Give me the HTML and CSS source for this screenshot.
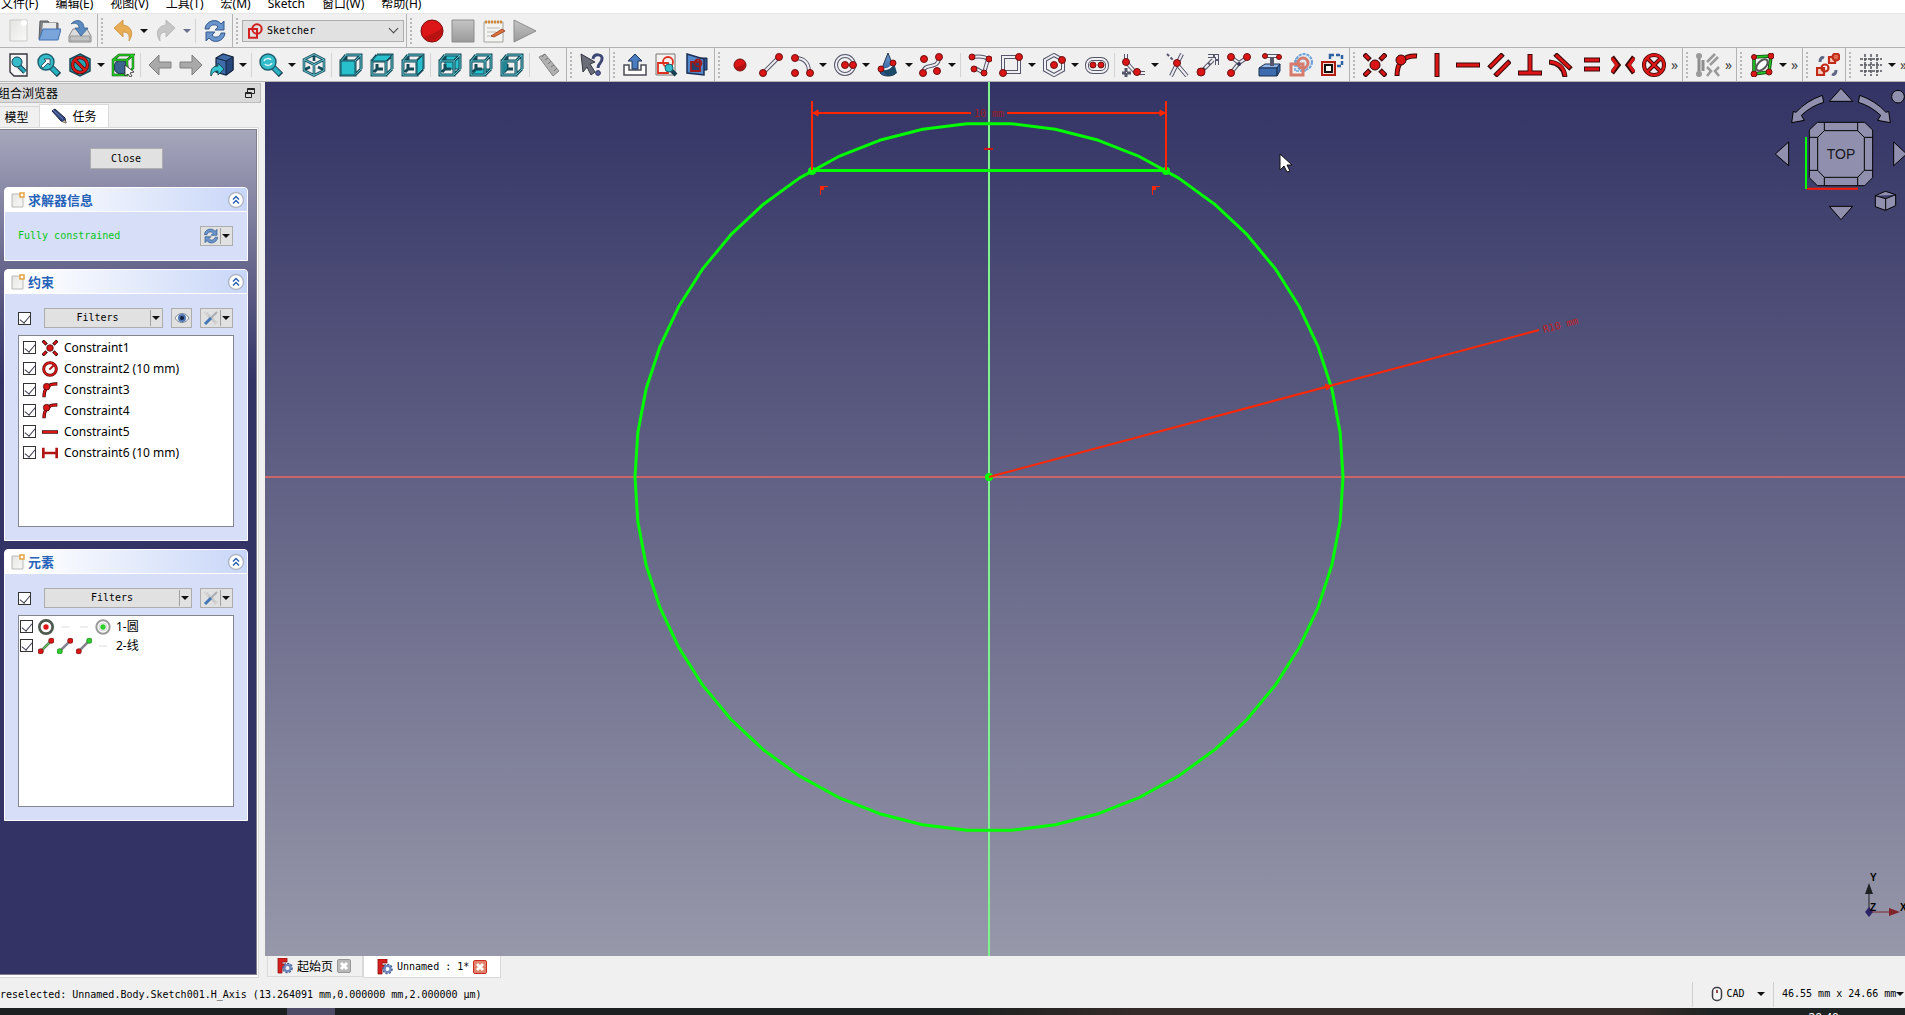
FILE: index.html
```html
<!DOCTYPE html>
<html lang="zh-CN">
<head>
<meta charset="utf-8">
<title>FreeCAD</title>
<link rel="stylesheet" href="styles.css">
</head>
<body>
<svg class="defs" width="0" height="0" aria-hidden="true">
  <defs>
    <linearGradient id="g-paper" x2="1" y2="1"><stop stop-color="#e4e4e2"/><stop offset="1" stop-color="#fafafa"/></linearGradient>
    <linearGradient id="g-grey" x2="0" y2="1"><stop stop-color="#c4c4c4"/><stop offset="1" stop-color="#9a9a9a"/></linearGradient>
    <linearGradient id="g-blue" x2="0" y2="1"><stop stop-color="#6f9fd8"/><stop offset="1" stop-color="#24508c"/></linearGradient>
  </defs>
  <symbol id="i-new" viewBox="0 0 24 24"><path d="M4 1h17v21H4z" fill="url(#g-paper)" stroke="#c9c9c6"/><circle cx="18" cy="4" r="3" fill="#fff"/></symbol>
  <symbol id="i-open" viewBox="0 0 24 24"><path d="M3 2h8l1 2h9v16H2z" fill="#7f8285" stroke="#5c5f62"/><path d="M6 4h13v9H5z" fill="#e9e9e9"/><path d="M6 10h18l-3 11H2z" fill="#7aa5da" stroke="#3f6fb0"/></symbol>
  <symbol id="i-save" viewBox="0 0 24 24"><path d="M5 10h14l4 7v6H1v-6z" fill="#dcdcdc" stroke="#8b8b8b"/><path d="M2 17h20v5H2z" fill="#c2c2c2" stroke="#9a9a9a"/><path d="M3 5c5-6 13-4 13 4h4l-7 8-6-8h4c0-4-4-6-8-4z" fill="#5b8ac0" stroke="#34608f" stroke-width=".8"/></symbol>
  <symbol id="i-undo" viewBox="0 0 24 24"><path d="M3 9l9-8v5c9 1 11 9 6 16 1-6-1-9-6-9v5z" fill="#e8ac55" stroke="#c98f3e" stroke-width=".8"/></symbol>
  <symbol id="i-redo" viewBox="0 0 24 24"><path d="M21 9l-9-8v5C3 7 1 15 6 22c-1-6 1-9 6-9v5z" fill="#c6c6c6" stroke="#b0b0b0" stroke-width=".8"/></symbol>
  <symbol id="i-refresh" viewBox="0 0 24 24"><path d="M2 10C3 1 14-1 18 5l3-3v9h-9l3-3c-3-4-8-2-9 2z" fill="#6a95cc" stroke="#34598c"/><path d="M22 14c-1 9-12 11-16 5l-3 3v-9h9l-3 3c3 4 8 2 9-2z" fill="#6a95cc" stroke="#34598c"/></symbol>
  <symbol id="i-sketcher" viewBox="0 0 24 24"><path d="M3 9h12v13H3z" fill="none" stroke="#d21f1f" stroke-width="3"/><circle cx="15" cy="9" r="7" fill="none" stroke="#d21f1f" stroke-width="3"/></symbol>
  <symbol id="i-record" viewBox="0 0 24 24"><circle cx="12" cy="12" r="11" fill="#dc1616" stroke="#7a0b0b"/><path d="M4 18C10 16 17 13 22 9c2 11-13 17-18 9z" fill="#b81313"/></symbol>
  <symbol id="i-stop" viewBox="0 0 24 24"><path d="M1 1h22v22H1z" fill="url(#g-grey)" stroke="#8d8d8d"/></symbol>
  <symbol id="i-edit" viewBox="0 0 24 24"><path d="M2 3h19v20H2z" fill="#f3f3f1" stroke="#a2a2a0"/><path d="M3 3h18" stroke="#d08a3a" stroke-width="3" stroke-dasharray="2 1"/><path d="M5 9h13M5 13h9M5 17h6" stroke="#bbb"/><path d="M9 17l11-7 3 2-11 6z" fill="#e0703a" stroke="#8f3a20" stroke-width=".8"/></symbol>
  <symbol id="i-play" viewBox="0 0 24 24"><path d="M1 1l22 11L1 23z" fill="url(#g-grey)" stroke="#8d8d8d"/></symbol>

  <symbol id="i-fitall" viewBox="0 0 24 24"><path d="M4 1h17v22H8l-4-4z" fill="#f5f5f5" stroke="#34343c" stroke-width="1.4"/><path d="M13 13l6 6" stroke="#173f52" stroke-width="5"/><path d="M13 13l6 6" stroke="#28a8ba" stroke-width="3"/><circle cx="11" cy="9" r="5" fill="#35bccb" stroke="#173f52"/></symbol>
  <symbol id="i-fitsel" viewBox="0 0 24 24"><path d="M13 13l9 9" stroke="#173f52" stroke-width="6"/><path d="M13 13l8 8" stroke="#28b0c0" stroke-width="4"/><circle cx="9" cy="9" r="8" fill="#35bccb" stroke="#1a5d6d" stroke-width="1.4"/><path d="M4 13l5-5-2-2h6v6l-2-2-5 5z" fill="#fff" stroke="#234" stroke-width=".8"/></symbol>
  <symbol id="i-draw" viewBox="0 0 24 24"><path d="M12 1l10 5v12l-10 5-10-5V6z" fill="#25a4b2" stroke="#174a5a" stroke-width="1.5"/><circle cx="12" cy="12" r="7.500" fill="none" stroke="#5c0a0a" stroke-width="3.500"/><path d="M7 7l10 10" stroke="#5c0a0a" stroke-width="3.500"/><circle cx="12" cy="12" r="7.500" fill="none" stroke="#dc1a1a" stroke-width="2"/><path d="M7 7l10 10" stroke="#dc1a1a" stroke-width="2"/></symbol>
  <symbol id="i-bbox" viewBox="0 0 24 24"><circle cx="10" cy="14" r="7" fill="#3c6290" stroke="#17304c"/><path d="M2 7h14v15H2zM2 7l6-5h14l-6 5M22 2v13l-6 7" fill="none" stroke="#123c12" stroke-width="2.400"/><path d="M2 7h14v15H2zM2 7l6-5h14l-6 5M22 2v13l-6 7" fill="none" stroke="#1fd51f" stroke-width="1.500"/><path d="M14 12l9 7-4 1 2 3-2 1-2-3-3 2z" fill="#fff" stroke="#222" stroke-width=".8"/></symbol>
  <symbol id="i-back" viewBox="0 0 24 24"><path d="M1 12L11 2v7h12v6H11v7z" fill="#a9a9a9" stroke="#808080"/></symbol>
  <symbol id="i-fwd" viewBox="0 0 24 24"><path d="M23 12L13 2v7H1v6h12v7z" fill="#a9a9a9" stroke="#808080"/></symbol>
  <symbol id="i-link" viewBox="0 0 24 24"><path d="M6 5l7-4 10 3v13l-7 5-10-3z" fill="#3f6bab" stroke="#14243f" stroke-width="1.2"/><path d="M6 5l10 3v14l7-5V4L16 8" fill="#27477c" stroke="#14243f"/><path d="M1 23c-1-7 2-10 7-10v-3l6 6-6 6v-4c-3 0-5 1-7 5z" fill="#35c4cf" stroke="#144a55"/></symbol>
  <symbol id="i-zoom" viewBox="0 0 24 24"><path d="M14 14l8 8" stroke="#173f52" stroke-width="6"/><path d="M14 14l7 7" stroke="#28b0c0" stroke-width="4"/><circle cx="9" cy="9" r="8" fill="#35bccb" stroke="#1a5d6d" stroke-width="1.4"/><path d="M5 8c1-3 6-3 7-1M13 10c-1 3-6 3-7 1" fill="none" stroke="#e8f8fa" stroke-width="1.500"/></symbol>
  <symbol id="i-iso" viewBox="0 0 24 24"><path d="M12 1.500l10 5v11l-10 5-10-5v-11zM2 6.500l10 5 10-5M12 11v11M12 2v6M2 17l6-3M22 17l-6-3" fill="none" stroke="#154a58" stroke-width="2.600"/><path d="M12 1.500l10 5v11l-10 5-10-5v-11zM2 6.500l10 5 10-5M12 11v11" fill="none" stroke="#6fccd8"/></symbol>
  <symbol id="wire" viewBox="0 0 24 24"><path class="wa" d="M2 8h14v14H2zM7 2h15v14M7 2L2 8M22 2l-6 6M22 16l-6 6M7 2v6M7 11v5h6M7 16l-3 3"/><path class="wb" d="M2 8h14v14H2zM7 2h15v14M7 2L2 8M22 2l-6 6M22 16l-6 6"/></symbol>
  <symbol id="i-front" viewBox="0 0 24 24"><use href="#wire"/><path class="face" d="M2 8h14v14H2z"/></symbol>
  <symbol id="i-top" viewBox="0 0 24 24"><use href="#wire"/><path class="face" d="M2 8l5-6h15l-6 6z"/></symbol>
  <symbol id="i-right" viewBox="0 0 24 24"><use href="#wire"/><path class="face" d="M16 8l6-6v14l-6 6z"/></symbol>
  <symbol id="i-rear" viewBox="0 0 24 24"><path class="face" d="M7 2h15v14H7z"/><use href="#wire"/></symbol>
  <symbol id="i-bottom" viewBox="0 0 24 24"><path class="face" d="M2 22l5-6h15l-6 6z"/><use href="#wire"/></symbol>
  <symbol id="i-left" viewBox="0 0 24 24"><path class="face" d="M2 8l5-6v14l-5 6z"/><use href="#wire"/><path d="M3 9h4v7l-4 5z" fill="#1d8796"/></symbol>
  <symbol id="i-measure" viewBox="0 0 24 24"><path d="M2 4l6-3 14 17-6 5z" fill="#b0b0b0" stroke="#888"/><path d="M8 1l-3 3M11 5L8 7M14 8l-3 3M17 12l-3 2M20 15l-3 3" stroke="#777"/></symbol>

  <symbol id="i-whats" viewBox="0 0 24 24"><path d="M1 1l14 8-5 2 5 8-4 3-4-8-4 5z" fill="#6b6d78" stroke="#34363f"/><path d="M13 6c1-6 10-5 9 0 0 4-4 4-4 9" fill="none" stroke="#3d4775" stroke-width="3"/><circle cx="18" cy="20" r="2.400" fill="#54609a" stroke="#2d3561"/></symbol>
  <symbol id="i-leave" viewBox="0 0 24 24"><path d="M1 12h5v5h12v-5h5v10H1z" fill="#fff" stroke="#4b4b55" stroke-width="1.500"/><path d="M12 1l7 7h-4v8H9V8H5z" fill="#4c7cc0" stroke="#1d3358"/></symbol>
  <symbol id="i-viewsk" viewBox="0 0 24 24"><path d="M2 1h19v21H2z" fill="#f6f2ef" stroke="#777"/><path d="M4 10h10v10H4z" fill="none" stroke="#e0301e" stroke-width="1.800"/><circle cx="14" cy="9" r="5" fill="none" stroke="#e0301e" stroke-width="1.800"/><path d="M17 17l5 5" stroke="#173f52" stroke-width="4"/><circle cx="15" cy="15" r="4" fill="#35bccb" stroke="#1a5d6d"/></symbol>
  <symbol id="i-section" viewBox="0 0 24 24"><path d="M13 5h9v12h-9z" fill="#2d559b" stroke="#14243f"/><path d="M2 1l17 5v16L2 20z" fill="#5287cc" stroke="#1b2f55" stroke-width="1.500"/><path d="M6 9h9v9H6z" fill="#24406f" stroke="#a01818" stroke-width="1.800"/><circle cx="13" cy="10" r="3.500" fill="none" stroke="#a01818" stroke-width="1.800"/></symbol>

  <symbol id="i-point" viewBox="0 0 24 24"><circle cx="12" cy="12" r="6" class="nd"/><path d="M7 14c4 0 8-2 10-4 1 8-8 10-10 4z" fill="#b01212"/></symbol>
  <symbol id="i-line" viewBox="0 0 24 24"><path class="dk" d="M4 20L20 4"/><path class="wh" d="M4 20L20 4"/><circle class="nd" cx="4" cy="20" r="3.500"/><circle class="nd" cx="20" cy="4" r="3.500"/></symbol>
  <symbol id="i-arc" viewBox="0 0 24 24"><path class="dk" d="M5 5c9 0 14 5 14 14"/><path class="wh" d="M5 5c9 0 14 5 14 14"/><circle class="nd" cx="5" cy="5" r="3.500"/><circle class="nd" cx="20" cy="20" r="3.500"/><circle class="nd" cx="5" cy="20" r="3.500"/></symbol>
  <symbol id="i-circle" viewBox="0 0 24 24"><circle class="dk" cx="12" cy="12" r="9"/><circle class="wh" cx="12" cy="12" r="9"/><circle class="nd" cx="12" cy="12" r="3.500"/><circle class="nd" cx="20" cy="12" r="3.500"/></symbol>
  <symbol id="i-conic" viewBox="0 0 24 24"><path d="M12 0l8 20c-3 4-13 4-16 0z" fill="url(#g-blue)" stroke="#26354f"/><path d="M4 16c7 2 13-1 14-6l3 10c-4 3-7 3-9 3z" fill="#1d4968"/><path class="wh" d="M5 16c7 1 11-2 12-6"/><circle class="nd" cx="5" cy="16" r="3"/><circle class="nd" cx="17" cy="10" r="3"/></symbol>
  <symbol id="i-bspline" viewBox="0 0 24 24"><path class="dk" d="M4 20c1-12 15-2 16-15"/><path class="wh" d="M4 20c1-12 15-2 16-15"/><circle class="nd" cx="5" cy="6" r="3.500"/><circle class="nd" cx="20" cy="4" r="3.500"/><circle class="nd" cx="4" cy="20" r="3.500"/><circle class="nd" cx="18" cy="18" r="3.500"/></symbol>
  <symbol id="i-poly" viewBox="0 0 24 24"><path class="dk" d="M4 4c6-1 12-1 16 2l-4 14-9-5"/><path class="wh" d="M4 4c6-1 12-1 16 2l-4 14-9-5"/><circle class="nd" cx="4" cy="4" r="3"/><circle class="nd" cx="21" cy="6" r="3"/><circle class="nd" cx="16" cy="20" r="3"/><circle class="nd" cx="6" cy="16" r="3"/></symbol>
  <symbol id="i-rect" viewBox="0 0 24 24"><path class="dk" d="M4 4h16v15H4z"/><path class="wh" d="M4 4h16v15H4z"/><circle class="nd" cx="20" cy="4" r="3.500"/><circle class="nd" cx="4" cy="20" r="3.500"/></symbol>
  <symbol id="i-hex" viewBox="0 0 24 24"><path class="dk" d="M12 2l9 5v10l-9 5-9-5V7z"/><path class="wh" d="M12 2l9 5v10l-9 5-9-5V7z"/><circle class="nd" cx="12" cy="12" r="3.500"/><circle class="nd" cx="20" cy="7" r="3.500"/></symbol>
  <symbol id="i-slot" viewBox="0 0 24 24"><rect class="dk" x="2" y="6" width="20" height="13" rx="6"/><rect class="wh" x="2" y="6" width="20" height="13" rx="6"/><circle class="nd" cx="8" cy="12" r="3"/><circle class="nd" cx="16" cy="12" r="3"/></symbol>
  <symbol id="i-fillet" viewBox="0 0 24 24"><path class="dk" d="M4 1v8l10 11h9"/><path class="wh" d="M4 1v8l10 11h9"/><path d="M4 15v9M0 20h10" stroke="#55566a" stroke-width="3" stroke-dasharray="4 1"/><circle class="nd" cx="4" cy="9" r="3.500"/><circle class="nd" cx="15" cy="19" r="3.500"/></symbol>
  <symbol id="i-trim" viewBox="0 0 24 24"><path class="dk" d="M17 1L6 23M10 9l12 14"/><path d="M2 1l7 7" stroke="#55566a" stroke-width="2" stroke-dasharray="3 2"/><path class="wh" d="M17 1L6 23M10 9l12 14"/><circle class="nd" cx="12" cy="10" r="3.500"/></symbol>
  <symbol id="i-extend" viewBox="0 0 24 24"><path class="dk" d="M4 20l13-13M12 3h9v9"/><path class="wh" d="M4 20l13-13M12 3h9v9" stroke-dasharray="5 2"/><circle class="nd" cx="5" cy="19" r="4"/></symbol>
  <symbol id="i-split" viewBox="0 0 24 24"><path class="dk" d="M4 4l8 6 9-6M12 10L4 20"/><path class="wh" d="M4 4l8 6 9-6M12 10L4 20"/><circle class="nd" cx="4" cy="4" r="3.500"/><circle class="nd" cx="20" cy="4" r="3.500"/><circle class="nd" cx="4" cy="20" r="3.500"/><circle cx="12" cy="11" r="2" fill="#335"/></symbol>
  <symbol id="i-external" viewBox="0 0 24 24"><path d="M1 15l6-4h15l-3 4z" fill="#8db5e8" stroke="#1c3152"/><path d="M1 15h18v8H1zM19 15l3-4v7l-3 5z" fill="#3c6cae" stroke="#1c3152"/><path class="dk" d="M6 3h15M14 3v10"/><path class="wh" d="M6 3h15"/><circle class="nd" cx="7" cy="3" r="2.500"/><circle class="nd" cx="21" cy="4" r="2.500"/></symbol>
  <symbol id="i-carbon" viewBox="0 0 24 24"><path d="M6 6h10v12H6z" fill="#dbe8f5" stroke="#6ba0d6" stroke-width="1.500" stroke-dasharray="3 1"/><circle cx="15" cy="9" r="8" fill="#dbe8f5" stroke="#6ba0d6" stroke-width="2" stroke-dasharray="3 1"/><path d="M2 11h12v11H2z" fill="none" stroke="#d67a6c" stroke-width="3"/><circle cx="14" cy="10" r="5" fill="none" stroke="#d67a6c" stroke-width="3"/></symbol>
  <symbol id="i-copy" viewBox="0 0 24 24"><path d="M10 2h12v11H10z" fill="none" stroke="#2e62a3" stroke-width="2.500" stroke-dasharray="4 2"/><path d="M2 9h13v13H2z" fill="#f7d9cd" stroke="#b01d12" stroke-width="2"/><path d="M5 12h7v7H5z" fill="#fff" stroke="#111" stroke-width="2"/></symbol>

  <symbol id="i-coinc" viewBox="0 0 24 24"><path class="rb" d="M1 1l6 6M23 1l-6 6M1 23l6-6M23 23l-6-6"/><path class="rt" d="M2 2l4 4M22 2l-4 4M2 22l4-4M22 22l-4-4"/><circle class="nd2" cx="12" cy="12" r="5"/></symbol>
  <symbol id="i-onobj" viewBox="0 0 24 24"><path class="rb" d="M3 23C3 9 10 2 23 3"/><path class="rt" d="M3 22C3 9 10 3 22 3"/><circle class="nd2" cx="7" cy="7" r="5"/></symbol>
  <symbol id="i-vert" viewBox="0 0 24 24"><path class="rb" d="M12 0v24"/><path class="rt" d="M12 1v22"/></symbol>
  <symbol id="i-horiz" viewBox="0 0 24 24"><path class="rb" d="M0 12h24"/><path class="rt" d="M1 12h22"/></symbol>
  <symbol id="i-para" viewBox="0 0 24 24"><path class="rb" d="M2 15L16 1M8 23L23 8"/><path class="rt" d="M3 14L15 2M9 22L22 9"/></symbol>
  <symbol id="i-perp" viewBox="0 0 24 24"><path class="rb" d="M0 20h24M12 20V1"/><path class="rt" d="M1 20h22M12 20V2"/></symbol>
  <symbol id="i-tangent" viewBox="0 0 24 24"><path class="rb" d="M6 1l16 15M0 9c9 1 15 6 16 15"/><path class="rt" d="M7 2l14 13M1 9c9 1 14 6 15 14"/></symbol>
  <symbol id="i-equal" viewBox="0 0 24 24"><path class="rb" d="M4 7h16M4 16h16"/><path class="rt" d="M5 7h14M5 16h14"/></symbol>
  <symbol id="i-sym" viewBox="0 0 24 24"><path class="rb" d="M1 4l6 8-6 8M23 4l-6 8 6 8"/><path class="rt" d="M1 5l5 7-5 7M23 5l-5 7 5 7"/></symbol>
  <symbol id="i-block" viewBox="0 0 24 24"><g fill="none" stroke="#3a0808" stroke-width="4"><circle cx="12" cy="12" r="10"/><path d="M5 5l14 14M19 5L5 19"/></g><g fill="none" stroke="#dc1616" stroke-width="2.400"><circle cx="12" cy="12" r="10"/><path d="M5 5l14 14M19 5L5 19"/></g></symbol>
  <symbol id="i-toggle" viewBox="0 0 24 24"><path d="M3 3v19M7 7v11" stroke="#8d8d8d" stroke-width="3"/><circle cx="3" cy="3" r="3" fill="#9a9a9a"/><circle cx="3" cy="21" r="3" fill="#9a9a9a"/><path d="M11 9l8-8M14 12l8-8M11 14l4 4-4 5M23 14l-4 4 4 5" fill="none" stroke="#9a9a9a" stroke-width="2.500"/></symbol>
  <symbol id="i-dof" viewBox="0 0 24 24"><path d="M4 4l17-1-2 16-15 2z" fill="#f4f4f4" stroke="#114411" stroke-width="3.500"/><path d="M4 4l17-1-2 16-15 2z" fill="none" stroke="#22c322" stroke-width="1.800"/><ellipse cx="12" cy="12" rx="7" ry="4" transform="rotate(-45 12 12)" fill="#fff" stroke="#555" stroke-width="2"/><circle class="nd" cx="4" cy="4" r="2.500"/><circle class="nd" cx="21" cy="3" r="3"/><circle class="nd" cx="19" cy="19" r="3"/><circle class="nd" cx="4" cy="21" r="3"/></symbol>
  <symbol id="i-switch" viewBox="0 0 24 24"><path d="M1 15h7v7H1zM13 4h6v6h-6z" fill="#f4cbbb" stroke="#c22a18" stroke-width="2.200"/><circle cx="9" cy="15" r="3.500" fill="none" stroke="#c22a18" stroke-width="2.200"/><circle cx="20" cy="4" r="3.500" fill="#e06a50" stroke="#c22a18" stroke-width="2.200"/><path d="M4 9c0-4 2-5 4-4M20 17c0 4-2 5-4 4" fill="none" stroke="#5d6683" stroke-width="3"/></symbol>
  <symbol id="i-grid" viewBox="0 0 24 24"><path d="M6 1v22M12 1v22M18 1v22M1 6h22M1 12h22M1 18h22" stroke="#50525a" stroke-width="1.500" stroke-dasharray="3 1"/></symbol>

  <symbol id="i-radius" viewBox="0 0 24 24"><circle cx="12" cy="12" r="9.500" fill="#fff" stroke="#6a1010" stroke-width="4.500"/><circle cx="12" cy="12" r="9.500" fill="none" stroke="#d91515" stroke-width="2.500"/><path d="M11 13l7-7" stroke="#b31212" stroke-width="3"/></symbol>
  <symbol id="i-hdist" viewBox="0 0 24 24"><path d="M2 4v16M22 4v16M2 12h20" stroke="#b01414" stroke-width="4"/></symbol>
  <symbol id="e-circle" viewBox="0 0 24 24"><circle cx="12" cy="12" r="10" fill="#fff" stroke="#4d5a4d" stroke-width="4"/><circle cx="12" cy="12" r="4" fill="#d91515"/></symbol>
  <symbol id="e-center" viewBox="0 0 24 24"><circle cx="12" cy="12" r="10" fill="#fff" stroke="#9a9a9a" stroke-width="3"/><circle cx="12" cy="12" r="6" fill="none" stroke="#bbb"/><circle cx="12" cy="12" r="4" fill="#2dcf2d"/></symbol>
  <symbol id="e-line" viewBox="0 0 24 24"><path d="M4 20L20 4" stroke="#3d5a3d" stroke-width="4"/><path d="M4 20L20 4" stroke="#69c869" stroke-width="2"/><circle cx="4" cy="20" r="4" class="nd"/><circle cx="20" cy="4" r="4" class="nd"/></symbol>
  <symbol id="e-start" viewBox="0 0 24 24"><path d="M4 20L20 4" stroke="#85858f" stroke-width="4"/><circle cx="4" cy="20" r="4" class="gn"/><circle cx="20" cy="4" r="4" class="nd"/></symbol>
  <symbol id="e-end" viewBox="0 0 24 24"><path d="M4 20L20 4" stroke="#85858f" stroke-width="4"/><circle cx="4" cy="20" r="4" class="nd"/><circle cx="20" cy="4" r="4" class="gn"/></symbol>
  <symbol id="e-none" viewBox="0 0 24 24"><path d="M6 12h12" stroke="#ddd" stroke-width="1.500"/></symbol>

  <symbol id="i-float" viewBox="0 0 12 12"><path d="M3.500 1.500h7v5h-7zM3.500 2.500h7M1.500 5.500h6v5h-6zM1.500 6.500h6" fill="#dadada" stroke="#222"/></symbol>
  <symbol id="i-pencil" viewBox="0 0 16 16"><path d="M1 3l3-2 10 9 1 5-5-2z" fill="#32477f" stroke="#1c2748"/><path d="M2 2l10 9" stroke="#7087c0"/><path d="M14 12l1 3-4-1z" fill="#c9b28a"/></symbol>
  <symbol id="i-doc" viewBox="0 0 14 16"><path d="M1 2h11v13H1z" fill="url(#g-paper)" stroke="#b9b9b9"/><path d="M9 1h4v4H9z" fill="#fff" stroke="#e3a440" stroke-width="1.500"/></symbol>
  <symbol id="i-up" viewBox="0 0 18 18"><circle cx="9" cy="9" r="7.500" fill="#fff" stroke="#b4b8c4" stroke-width="1.500"/><path d="M6 8.500l3-3 3 3M6 12.500l3-3 3 3" fill="none" stroke="#2a62b0" stroke-width="1.500"/></symbol>
  <symbol id="i-eye" viewBox="0 0 16 16"><path d="M1 8c3-6 11-6 14 0-3 6-11 6-14 0z" fill="#f2f2f2" stroke="#858c96"/><circle cx="8" cy="8" r="4" fill="#4b78b5"/><circle cx="8" cy="8" r="2" fill="#15213a"/></symbol>
  <symbol id="i-tools" viewBox="0 0 16 16"><path d="M3 3l10 10" stroke="#cacaca" stroke-width="3"/><path d="M1 2l4 4M11 15l4-4" stroke="#d6d6d6" stroke-width="2"/><path d="M14 2L8 8" stroke="#a9adb3" stroke-width="2"/><path d="M8 8l-6 6" stroke="#4577b8" stroke-width="3"/></symbol>
  <symbol id="i-logo" viewBox="0 0 16 16"><path d="M1 0h9v4H5v2h3v4H5v5H1z" fill="#d81e1e" stroke="#8c1010" stroke-width=".8"/><circle cx="10.500" cy="10" r="4" fill="none" stroke="#4a5f94" stroke-width="2.600" stroke-dasharray="2 1"/><circle cx="10.500" cy="10" r="3" fill="none" stroke="#6e86bd" stroke-width="2"/></symbol>
  <symbol id="i-x" viewBox="0 0 14 14"><path d="M4 4l6 6M10 4l-6 6" stroke="#fff" stroke-width="3"/></symbol>
  <symbol id="i-mouse" viewBox="0 0 12 16"><rect x="1.500" y="1.500" width="9" height="13" rx="4" fill="#f8f8f8" stroke="#3f3f46" stroke-width="1.500"/><path d="M6 4v3" stroke="#9c4a4a" stroke-width="2"/></symbol>
</svg>

<nav class="menubar" aria-label="菜单">
  <a href="#">文件(F)</a><a href="#">编辑(E)</a><a href="#">视图(V)</a><a href="#">工具(T)</a><a href="#">宏(M)</a><a href="#">Sketch</a><a href="#">窗口(W)</a><a href="#">帮助(H)</a>
</nav>

<div class="toolbar">
  <div class="group first">
    <button class="tool" aria-label="New"><svg><use href="#i-new"/></svg></button>
    <button class="tool" aria-label="Open"><svg><use href="#i-open"/></svg></button>
    <button class="tool" aria-label="Save"><svg><use href="#i-save"/></svg></button>
  </div>
  <div class="group">
    <button class="tool" aria-label="Undo"><svg><use href="#i-undo"/></svg></button><button class="drop" aria-label="Undo history"></button>
    <button class="tool" aria-label="Redo"><svg><use href="#i-redo"/></svg></button><button class="drop dim" aria-label="Redo history"></button>
    <span class="sep"></span>
    <button class="tool" aria-label="Refresh"><svg><use href="#i-refresh"/></svg></button>
  </div>
  <div class="group">
    <div class="workbench"><svg><use href="#i-sketcher"/></svg><select aria-label="Workbench"><option>Sketcher</option></select></div>
  </div>
  <div class="group last">
    <button class="tool" aria-label="Record macro"><svg><use href="#i-record"/></svg></button>
    <button class="tool" aria-label="Stop macro"><svg><use href="#i-stop"/></svg></button>
    <button class="tool" aria-label="Macros"><svg><use href="#i-edit"/></svg></button>
    <button class="tool" aria-label="Execute macro"><svg><use href="#i-play"/></svg></button>
  </div>
</div>

<div class="toolbar">
  <div class="group first">
    <button class="tool" aria-label="Fit all"><svg><use href="#i-fitall"/></svg></button>
    <button class="tool" aria-label="Fit selection"><svg><use href="#i-fitsel"/></svg></button>
    <button class="tool" aria-label="Draw style"><svg><use href="#i-draw"/></svg></button><button class="drop" aria-label="Draw styles"></button>
    <button class="tool" aria-label="Bounding box"><svg><use href="#i-bbox"/></svg></button>
    <span class="sep"></span>
    <button class="tool" aria-label="Back"><svg><use href="#i-back"/></svg></button>
    <button class="tool" aria-label="Forward"><svg><use href="#i-fwd"/></svg></button>
    <button class="tool" aria-label="Go to linked object"><svg><use href="#i-link"/></svg></button><button class="drop" aria-label="Link menu"></button>
    <span class="sep"></span>
    <button class="tool" aria-label="Sync view"><svg><use href="#i-zoom"/></svg></button><button class="drop" aria-label="Zoom menu"></button>
    <button class="tool" aria-label="Isometric"><svg><use href="#i-iso"/></svg></button>
    <span class="sep"></span>
    <button class="tool" aria-label="Front"><svg><use href="#i-front"/></svg></button>
    <button class="tool" aria-label="Top"><svg><use href="#i-top"/></svg></button>
    <button class="tool" aria-label="Right"><svg><use href="#i-right"/></svg></button>
    <span class="sep"></span>
    <button class="tool" aria-label="Rear"><svg><use href="#i-rear"/></svg></button>
    <button class="tool" aria-label="Bottom"><svg><use href="#i-bottom"/></svg></button>
    <button class="tool" aria-label="Left"><svg><use href="#i-left"/></svg></button>
    <span class="sep"></span>
    <button class="tool" aria-label="Measure"><svg><use href="#i-measure"/></svg></button>
  </div>
  <div class="group"><button class="tool" aria-label="What's this?"><svg><use href="#i-whats"/></svg></button></div>
  <div class="group">
    <button class="tool" aria-label="Leave sketch"><svg><use href="#i-leave"/></svg></button>
    <button class="tool" aria-label="View sketch"><svg><use href="#i-viewsk"/></svg></button>
    <button class="tool" aria-label="View section"><svg><use href="#i-section"/></svg></button>
  </div>
  <div class="group">
    <button class="tool" aria-label="Point"><svg><use href="#i-point"/></svg></button>
    <button class="tool" aria-label="Line"><svg><use href="#i-line"/></svg></button>
    <button class="tool" aria-label="Arc"><svg><use href="#i-arc"/></svg></button><button class="drop" aria-label="Arcs"></button>
    <button class="tool" aria-label="Circle"><svg><use href="#i-circle"/></svg></button><button class="drop" aria-label="Circles"></button>
    <button class="tool" aria-label="Conic"><svg><use href="#i-conic"/></svg></button><button class="drop" aria-label="Conics"></button>
    <button class="tool" aria-label="B-spline"><svg><use href="#i-bspline"/></svg></button><button class="drop" aria-label="B-splines"></button>
    <span class="sep"></span>
    <button class="tool" aria-label="Polyline"><svg><use href="#i-poly"/></svg></button>
    <button class="tool" aria-label="Rectangle"><svg><use href="#i-rect"/></svg></button><button class="drop" aria-label="Rectangles"></button>
    <button class="tool" aria-label="Polygon"><svg><use href="#i-hex"/></svg></button><button class="drop" aria-label="Polygons"></button>
    <button class="tool" aria-label="Slot"><svg><use href="#i-slot"/></svg></button>
    <span class="sep"></span>
    <button class="tool" aria-label="Fillet"><svg><use href="#i-fillet"/></svg></button><button class="drop" aria-label="Fillets"></button>
    <button class="tool" aria-label="Trim"><svg><use href="#i-trim"/></svg></button>
    <button class="tool" aria-label="Extend"><svg><use href="#i-extend"/></svg></button>
    <button class="tool" aria-label="Split"><svg><use href="#i-split"/></svg></button>
    <button class="tool" aria-label="External geometry"><svg><use href="#i-external"/></svg></button>
    <button class="tool" aria-label="Carbon copy"><svg><use href="#i-carbon"/></svg></button>
    <button class="tool" aria-label="Construction geometry"><svg><use href="#i-copy"/></svg></button>
  </div>
  <div class="group">
    <button class="tool" aria-label="Coincident"><svg><use href="#i-coinc"/></svg></button>
    <button class="tool" aria-label="Point on object"><svg><use href="#i-onobj"/></svg></button>
    <button class="tool" aria-label="Vertical"><svg><use href="#i-vert"/></svg></button>
    <button class="tool" aria-label="Horizontal"><svg><use href="#i-horiz"/></svg></button>
    <button class="tool" aria-label="Parallel"><svg><use href="#i-para"/></svg></button>
    <button class="tool" aria-label="Perpendicular"><svg><use href="#i-perp"/></svg></button>
    <button class="tool" aria-label="Tangent"><svg><use href="#i-tangent"/></svg></button>
    <button class="tool" aria-label="Equal"><svg><use href="#i-equal"/></svg></button>
    <button class="tool" aria-label="Symmetric"><svg><use href="#i-sym"/></svg></button>
    <button class="tool" aria-label="Block"><svg><use href="#i-block"/></svg></button>
    <button class="more">»</button>
  </div>
  <div class="group">
    <button class="tool" aria-label="Toggle constraint"><svg><use href="#i-toggle"/></svg></button>
    <button class="more">»</button>
  </div>
  <div class="group">
    <button class="tool" aria-label="Select DoF"><svg><use href="#i-dof"/></svg></button><button class="drop" aria-label="Selection menu"></button>
    <button class="more">»</button>
  </div>
  <div class="group"><button class="tool" aria-label="Switch space"><svg><use href="#i-switch"/></svg></button></div>
  <div class="group last">
    <button class="tool" aria-label="Grid"><svg><use href="#i-grid"/></svg></button><button class="drop" aria-label="Grid menu"></button>
    <button class="more">»</button>
  </div>
</div>

<div class="workspace">
  <aside class="dock">
    <header class="dock-title"><span>组合浏览器</span><button aria-label="Float"><svg><use href="#i-float"/></svg></button></header>
    <div class="dock-tabs"><button>模型</button><button class="on"><svg><use href="#i-pencil"/></svg>任务</button></div>
    <div class="pane"><div class="tasks">
      <button class="close">Close</button>

      <section class="panel">
        <h2><svg class="doc"><use href="#i-doc"/></svg>求解器信息<svg class="up"><use href="#i-up"/></svg></h2>
        <div class="body"><div class="row solver"><span class="ok">Fully constrained</span><button class="split small" aria-label="Update"><span><svg><use href="#i-refresh"/></svg></span><i></i></button></div></div>
      </section>

      <section class="panel">
        <h2><svg class="doc"><use href="#i-doc"/></svg>约束<svg class="up"><use href="#i-up"/></svg></h2>
        <div class="body">
          <div class="row"><input type="checkbox" checked aria-label="Filter constraints"><button class="split"><span>Filters</span><i></i></button><button class="eye" aria-label="Show"><svg><use href="#i-eye"/></svg></button><button class="split small" aria-label="Settings"><span><svg><use href="#i-tools"/></svg></span><i></i></button></div>
          <ul class="list">
            <li><label><input type="checkbox" checked><svg><use href="#i-coinc"/></svg>Constraint1</label></li>
            <li><label><input type="checkbox" checked><svg><use href="#i-radius"/></svg>Constraint2 (10 mm)</label></li>
            <li><label><input type="checkbox" checked><svg><use href="#i-onobj"/></svg>Constraint3</label></li>
            <li><label><input type="checkbox" checked><svg><use href="#i-onobj"/></svg>Constraint4</label></li>
            <li><label><input type="checkbox" checked><svg><use href="#i-horiz"/></svg>Constraint5</label></li>
            <li><label><input type="checkbox" checked><svg><use href="#i-hdist"/></svg>Constraint6 (10 mm)</label></li>
          </ul>
        </div>
      </section>

      <section class="panel">
        <h2><svg class="doc"><use href="#i-doc"/></svg>元素<svg class="up"><use href="#i-up"/></svg></h2>
        <div class="body">
          <div class="row"><input type="checkbox" checked aria-label="Filter elements"><button class="split"><span>Filters</span><i></i></button><button class="split small" aria-label="Settings"><span><svg><use href="#i-tools"/></svg></span><i></i></button></div>
          <ul class="list elements">
            <li><label><input type="checkbox" checked><span class="marks"><svg><use href="#e-circle"/></svg><svg><use href="#e-none"/></svg><svg><use href="#e-none"/></svg><svg><use href="#e-center"/></svg></span>1-圆</label></li>
            <li><label><input type="checkbox" checked><span class="marks"><svg><use href="#e-line"/></svg><svg><use href="#e-start"/></svg><svg><use href="#e-end"/></svg><svg><use href="#e-none"/></svg></span>2-线</label></li>
          </ul>
        </div>
      </section>
    </div></div>
  </aside>

  <main class="center">
    <div class="viewport">
      <svg class="scene" viewBox="0 0 1640 874" preserveAspectRatio="xMidYMid slice" role="img" aria-label="Sketch">
        <defs><path id="quarter" d="M0-353.300L22.200-353.300 66.300-347.700 109.400-336.700 150.700-320.300 189.700-298.900 225.600-272.800 258.100-242.300 286.400-208.100 310.200-170.500 329.100-130.300 342.900-88 351.200-44.400 354 0"/></defs>
        <g transform="translate(724 395)">
          <path d="M-724 0H916" stroke="#cc6666" stroke-width="2"/>
          <path d="M0-395V479" stroke="#7df58c" stroke-width="2"/>
          <g fill="none" stroke="#00ff00" stroke-width="3" stroke-linejoin="round">
            <use href="#quarter"/><use href="#quarter" transform="scale(-1 1)"/><use href="#quarter" transform="scale(1 -1)"/><use href="#quarter" transform="scale(-1 -1)"/>
            <path d="M-177-306.500H177"/>
          </g>
          <g fill="#00ff00"><circle r="4"/><circle cx="-177" cy="-306" r="4"/><circle cx="177" cy="-306" r="4"/></g>
          <g stroke="#ff2600" stroke-width="2" fill="none">
            <path d="M-177-376V-307M177-376V-307M-177-364H-18M18-364H177M0 0L550-147"/>
          </g>
          <path d="M-176-364l5-3v6zM176-364l-5-3v6zM342-91l-6-2 2 6z" fill="#ff2600" stroke="#ff2600"/>
          <path d="M-5-328H4" stroke="#d01414" stroke-width="2"/>
          <path d="M-169-291h8v1h-4v3h-3v5h-1zM163-291h8v1h-4v3h-3v5h-1z" fill="#ff2600"/>
          <text class="dim-label" x="-15" y="-360">10 mm</text>
          <text class="dim-label bright" transform="translate(555 -144) rotate(-15)">R10 mm</text>
          <path d="M291-323v16l4-4 3 6 3-1-3-6h5z" fill="#fff" stroke="#111"/>
        </g>
      </svg>

      <svg class="navcube" viewBox="0 0 495 450" role="img" aria-label="Navigation cube">
        <g fill="#9090ae" stroke="#000" stroke-width="3" stroke-linejoin="round">
          <path d="M303 25l35 39h-70zM303 419l35-40h-70zM106 222l40-36v71zM500 222l-39-36v71z"/>
          <path id="turn" d="M247 46l4 21Q214 78 184 106l9 15-38 7 5-34 8 3Q200 62 247 46z"/>
          <use href="#turn" transform="translate(606 0) scale(-1 1)"/>
          <circle cx="474" cy="50" r="19"/>
          <path d="M232 127H374L398 150V293L374 317H232L208 293V150z"/>
          <path d="M253 127v25h100v-25M253 317v-25h100v25M208 172h25v99h-25M398 172h-25v99h25M253 152l-20 20M353 152l20 20M253 292l-20-21M353 292l20-21" fill="none"/>
          <path d="M406 347l30-13 31 10v33l-31 14-30-11zM406 347l31 9 30-12M437 356v35"/>
        </g>
        <path d="M198 171v156" stroke="#00ff00" stroke-width="6"/><path d="M201 326h153" stroke="#ff1c00" stroke-width="6"/>
        <text x="303" y="237" text-anchor="middle">TOP</text>
      </svg>

      <svg class="axes" viewBox="0 0 50 50" role="img" aria-label="Axes">
        <path d="M14 37V11" stroke="#1c2222"/><path d="M14 8l4 11h-8z" fill="#1c2222"/>
        <path d="M14 37h22" stroke="#80242c"/><path d="M45 37l-11-4v8z" fill="#80242c"/><path d="M14 32l4 5-4 5-4-5z" fill="#2c2468"/>
        <text x="15" y="6">Y</text><text x="15" y="36">Z</text><text x="45" y="36">X</text>
      </svg>
    </div>
    <div class="doc-tabs">
      <div class="doc-tab cjk"><svg><use href="#i-logo"/></svg><span>起始页</span><button aria-label="关闭"><svg><use href="#i-x"/></svg></button></div>
      <div class="doc-tab on"><svg><use href="#i-logo"/></svg><span>Unnamed : 1*</span><button aria-label="关闭"><svg><use href="#i-x"/></svg></button></div>
    </div>
  </main>
</div>

<footer class="status">
  <output>reselected: Unnamed.Body.Sketch001.H_Axis (13.264091 mm,0.000000 mm,2.000000 μm)</output>
  <button class="nav-style"><svg><use href="#i-mouse"/></svg><span>CAD</span><i></i></button>
  <button class="dims"><span>46.55 mm x 24.66 mm</span><i></i></button>
</footer>
<div class="taskbar"><span class="task"></span><time>20:40</time></div>
</body>
</html>
```
FILE: styles.css
```css
* { box-sizing: border-box; }

body {
  margin: 0;
  height: 100vh;
  display: flex;
  flex-direction: column;
  overflow: hidden;
  background: #f0f0f0;
  color: #000;
  font: 10px/14px "DejaVu Sans Mono", "Noto Sans CJK SC", monospace;
}

button, select { font: inherit; color: inherit; margin: 0; padding: 0; border: 0; background: none; }
button { display: flex; align-items: center; justify-content: center; }
svg { display: block; flex: none; }
.defs { position: absolute; }

/* icon paint */
.dk { fill: none; stroke: #55566a; stroke-width: 4; }
.wh { fill: none; stroke: #f0f0f4; stroke-width: 2; }
.nd { fill: #dc1616; stroke: #6b1010; stroke-width: 1; }
.nd2 { fill: #d91515; stroke: #2a0808; stroke-width: 1; }
.gn { fill: #2dcf2d; stroke: #1d7a1d; stroke-width: 1; }
.rb { fill: none; stroke: #3a0808; stroke-width: 5; }
.rt { fill: none; stroke: #dc1616; stroke-width: 3; }
.wa { fill: none; stroke: #154a58; stroke-width: 3; }
.wb { fill: none; stroke: #5cc4d0; stroke-width: 1; }
.face { fill: #28c0cc; stroke: #154a58; stroke-width: 1; }

/* menu */
.menubar {
  flex: none;
  height: 14px;
  display: flex;
  gap: 17px;
  overflow: hidden;
  padding-left: 1px;
  background: #fff;
  border-bottom: 1px solid #e6e6e6;
  font: 12px/20px "Noto Sans", "Noto Sans CJK SC", sans-serif;
}
.menubar a { margin-top: -6px; color: #000; text-decoration: none; white-space: nowrap; }

/* toolbars */
.toolbar {
  flex: none;
  height: 34px;
  display: flex;
  overflow: hidden;
  border-bottom: 1px solid #b4b4b4;
}
.group {
  flex: none;
  display: flex;
  align-items: center;
  padding-right: 2px;
  border-right: 1px solid #b4b4b4;
}
.group::before {
  content: "";
  width: 2px;
  height: 26px;
  margin: 0 4px 0 3px;
  background: repeating-linear-gradient(#b8b8b8 0 2px, transparent 2px 4px);
}
.group.first { padding-left: 2px; }
.group.first::before { display: none; }
.group.last { border-right: 0; }
.tool { width: 31px; height: 30px; }
.tool svg { width: 24px; height: 24px; }
.drop { width: 12px; height: 30px; }
.drop::after, .split i, .status i {
  content: "";
  flex: none;
  border: 4px solid transparent;
  border-top-color: #111;
  border-bottom: 0;
}
.drop.dim::after { border-top-color: #6c7090; }
.sep { width: 1px; height: 24px; margin: 0 3px 0 2px; background: #d2d2d2; }
.more { width: 11px; height: 30px; font: 14px/30px "Noto Sans", sans-serif; color: #444; }

.workbench {
  width: 162px;
  height: 22px;
  display: flex;
  align-items: center;
  gap: 4px;
  padding: 0 4px;
  background: #e1e1e1;
  border: 1px solid #adadad;
}
.workbench svg { width: 16px; height: 16px; }
.workbench select { flex: 1; height: 20px; appearance: none; outline: 0; }
.workbench::after {
  content: "";
  width: 6px;
  height: 6px;
  margin: 0 2px 4px 0;
  border: solid #444;
  border-width: 0 1px 1px 0;
  transform: rotate(45deg);
}

/* workspace */
.workspace { flex: 1; min-height: 0; display: grid; grid-template-columns: 265px 1fr; }
.dock { display: flex; flex-direction: column; min-height: 0; padding: 1px 4px 0 0; font-family: "Noto Sans CJK SC", sans-serif; }
.dock-title {
  flex: none;
  height: 20px;
  display: flex;
  align-items: center;
  justify-content: space-between;
  padding-right: 4px;
  overflow: hidden;
  background: #dadada;
  border: 1px solid #bcbcbc;
  border-left: 0;
  font-size: 12px;
}
.dock-title span { margin-left: -2px; }
.dock-title svg { width: 12px; height: 12px; }
.dock-tabs { flex: none; height: 24px; display: flex; align-items: flex-end; }
.dock-tabs button { height: 21px; width: 39px; padding-right: 6px; border-top: 1px solid #d9d9d9; font-size: 12px; }
.dock-tabs .on {
  height: 23px;
  width: 70px;
  padding: 0;
  gap: 5px;
  background: #fff;
  border: 1px solid #d9d9d9;
  border-bottom: 0;
}
.dock-tabs svg { width: 16px; height: 16px; }
.pane {
  flex: 1;
  min-height: 0;
  margin-right: 2px;
  padding: 1px 1px 2px 0;
  background: #fff;
  border: 1px solid #d9d9d9;
  border-left: 0;
}
.tasks {
  height: 100%;
  overflow: hidden;
  padding: 18px 8px 0 4px;
  border: 1px solid #7f7f8c;
  border-left: 0;
  background: linear-gradient(#a6a6bc 0, #333366 250px);
}
.close { width: 73px; height: 21px; margin: 0 auto 18px; }
.close, .split, .eye { background: #e1e1e1; border: 1px solid #adadad; font: 10px/14px "DejaVu Sans Mono", monospace; }

.panel { margin-bottom: 8px; border: 1px solid #fff; border-radius: 4px 4px 0 0; background: #d6dff7; overflow: hidden; }
.panel h2 {
  height: 24px;
  margin: 0;
  display: flex;
  align-items: center;
  gap: 3px;
  padding: 0 2px 0 6px;
  border-bottom: 1px solid #fff;
  background: linear-gradient(90deg, #fff 10%, #c8d6f8);
  color: #2763b8;
  font-size: 13px;
  font-weight: 700;
}
.doc { width: 14px; height: 16px; }
.up { width: 18px; height: 18px; margin-left: auto; }
.body { padding: 14px 13px 13px; }
.row { display: flex; align-items: center; gap: 8px; padding-right: 1px; }
.row.solver { justify-content: space-between; padding-bottom: 1px; }
.ok { color: #00c814; font: 10px/14px "DejaVu Sans Mono", monospace; }
.split { flex: 1; height: 20px; }
.split span {
  flex: 1;
  height: 16px;
  display: flex;
  align-items: center;
  justify-content: center;
  border-right: 1px solid #a0a0a0;
}
.split i { margin: 0 2px 0 1px; }
.split.small { flex: none; width: 33px; }
.split svg, .eye svg { width: 16px; height: 16px; }
.eye { width: 21px; height: 20px; }

input[type="checkbox"] {
  appearance: none;
  flex: none;
  width: 13px;
  height: 13px;
  margin: 0;
  display: flex;
  justify-content: center;
  background: #fff;
  border: 1px solid #333;
}
.row input[type="checkbox"] { margin-right: 5px; }
input[type="checkbox"]:checked::before {
  content: "";
  width: 5px;
  height: 9px;
  border: solid #3c3c50;
  border-width: 0 1px 1px 0;
  transform: rotate(40deg);
}

.list {
  list-style: none;
  height: 192px;
  margin: 7px 0 0;
  padding: 1px 4px;
  background: #fff;
  border: 1px solid #828790;
  font: 12px/21px "Noto Sans", "Noto Sans CJK SC", sans-serif;
}
.list label { height: 21px; display: flex; align-items: center; gap: 6px; white-space: nowrap; }
.list svg { width: 16px; height: 16px; }
.list .rb { stroke: #a03030; }
.list.elements { padding: 1px; }
.elements label { height: 19px; gap: 5px; }
.marks { display: flex; gap: 3px; }

.center { min-width: 0; min-height: 0; display: flex; flex-direction: column; }
.viewport { position: relative; flex: 1; min-height: 0; overflow: hidden; background: linear-gradient(#333365, #9798aa); }
.scene { width: 100%; height: 100%; }
.dim-label { font: 10px "DejaVu Sans Mono", monospace; fill: #9c1c24; }
.dim-label.bright { fill: #c42020; }
.navcube { position: absolute; top: -2px; right: 0; width: 165px; height: 150px; }
.navcube text { font: 42px "Liberation Sans", sans-serif; fill: #16161c; }
.axes { position: absolute; right: 0; bottom: 31px; width: 50px; height: 50px; overflow: visible; }
.axes text { font: bold 10px "Liberation Sans", sans-serif; }

.doc-tabs { flex: none; height: 22px; display: flex; padding-left: 2px; }
.doc-tab { height: 21px; display: flex; align-items: center; gap: 4px; padding: 0 11px 0 9px; border: 1px solid #d9d9d9; border-top: 0; white-space: nowrap; }
.doc-tab.cjk { font: 12px/14px "Noto Sans CJK SC", sans-serif; }
.doc-tab.on { height: 22px; padding: 0 13px; background: #fff; }
.doc-tab svg { width: 16px; height: 16px; }
.doc-tab button { width: 14px; height: 14px; background: #b9b9b9; border: 1px solid #999; border-radius: 2px; }
.doc-tab.on button { background: #e0836c; border-color: #cc2a1c; }
.doc-tab button svg { width: 14px; height: 14px; }

/* status bar */
.status { flex: none; height: 30px; display: flex; align-items: center; overflow: hidden; padding-top: 2px; white-space: nowrap; }
.status output { flex: 1; min-width: 0; overflow: hidden; padding-top: 1px; }
.status button { height: 25px; border-left: 1px solid #d0d0d0; }
.nav-style { width: 81px; gap: 3px; padding-left: 10px; }
.nav-style svg { width: 12px; height: 16px; }
.nav-style i { margin-left: 9px; }
.status .dims { width: 132px; padding-left: 8px; justify-content: flex-start; }
.taskbar { flex: none; height: 7px; display: flex; justify-content: space-between; overflow: hidden; background: linear-gradient(90deg, #1c2020 50%, #352b29 60%, #352b29 86%, #1e2222 90%); }
.task { width: 48px; margin-left: 287px; background: #4e4b66; }
.taskbar time { margin: 3px 66px 0 0; color: #fff; font: 12px/14px "Noto Sans", sans-serif; }
```
